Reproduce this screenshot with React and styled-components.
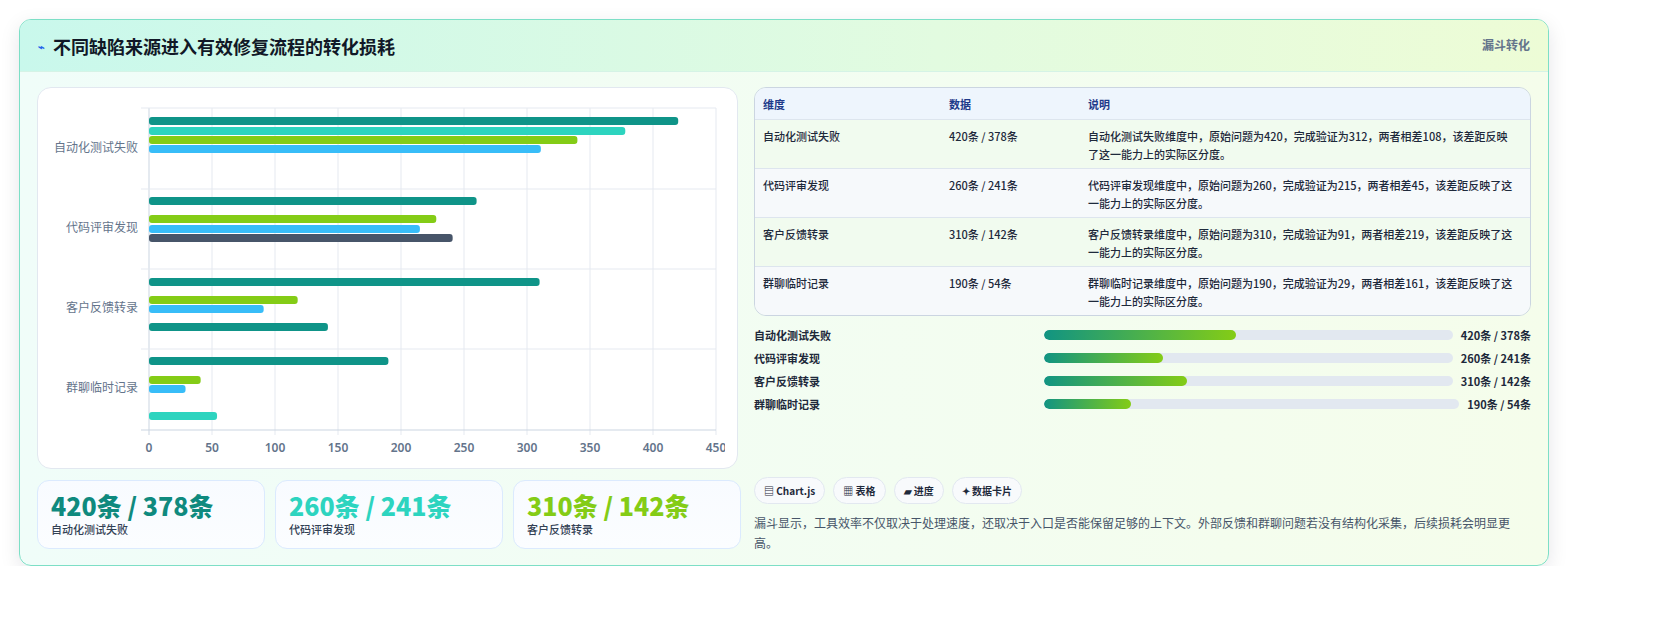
import React from "react";
import styled, { createGlobalStyle } from "styled-components";

const Global = createGlobalStyle`
  body { margin: 0; background: #fff; font-family: "Noto Sans CJK SC", "Noto Sans", sans-serif; }
`;

const Page = styled.div`padding: 19px 110px 0 19px; box-sizing: border-box; width: 1660px;`;
const Card = styled.div`
  width: 1530px; height: 547px; box-sizing: border-box;
  border: 1px solid #7ddfc6; border-radius: 12px; overflow: hidden;
  background: linear-gradient(90deg, #f0fdf9 0%, #f5fdeb 100%);
  box-shadow: 0 6px 20px rgba(15, 23, 42, 0.10);
`;
const Header = styled.div`
  height: 52px; box-sizing: border-box; padding: 0 18px;
  display: flex; align-items: center; justify-content: space-between;
  background: linear-gradient(90deg, #c9f8ec 0%, #e2fbe0 60%, #edfcd6 100%);
  border-bottom: 1px solid #d5f3e6;
`;
const Title = styled.h2`
  margin: 0; font-size: 18px; font-weight: 700; color: #111827;
  display: flex; align-items: center; gap: 8px;
`;
const Tag = styled.span`font-size: 12px; font-weight: 700; color: #64748b; align-self: flex-start; margin-top: 16px;`;
const Body = styled.div`display: grid; grid-template-columns: 701px 777px; gap: 16px; padding: 15px 17px 0 17px;`;
const Left = styled.div`display: flex; flex-direction: column; gap: 11px;`;
const ChartBox = styled.div`
  height: 382px; background: #fff; border: 1px solid #e2e8f0; border-radius: 14px; box-sizing: border-box;
`;
const Stats = styled.div`display: grid; grid-template-columns: repeat(3, 228px); gap: 10px;`;
const Stat = styled.div`
  height: 69px; box-sizing: border-box; padding: 8px 13px; border-radius: 12px;
  border: 1px solid #dbeafe; background: linear-gradient(180deg, #f8fbff, #fbfdff);
`;
const StatNum = styled.div`font-size: 25px; font-weight: 800; color: ${p => p.$c}; line-height: 32px;`;
const StatLbl = styled.div`font-size: 11px; color: #334155; font-weight: 500;`;
const Right = styled.div`display: flex; flex-direction: column;`;
const Table = styled.div`
  border: 1px solid #cbd5e1; border-radius: 12px; overflow: hidden; font-size: 11px; color: #1e293b;
`;
const Row = styled.div`
  display: grid; grid-template-columns: 186px 139px 1fr; padding: 0 14px 0 8px;
  align-items: ${p => (p.$head ? "center" : "start")};
  min-height: ${p => (p.$head ? "31px" : "49px")};
  padding-top: ${p => (p.$head ? "0" : "7px")}; box-sizing: border-box;
  background: ${p => (p.$head ? "#eef5fd" : p.$alt ? "#f6f9fb" : "#f1fbef")};
  color: ${p => (p.$head ? "#1e3a8a" : "#1e293b")};
  font-weight: ${p => (p.$head ? 600 : 500)};
  border-top: ${p => (p.$first ? "none" : "1px solid #dde5ee")};
  line-height: 18px;
`;
const Bars = styled.div`display: flex; flex-direction: column; gap: 5px; margin-top: 10px;`;
const BarRow = styled.div`
  display: grid; grid-template-columns: 282px 1fr auto; gap: 8px; align-items: center;
  font-size: 11px; font-weight: 600; color: #1e293b; height: 18px;
`;
const Track = styled.div`height: 10px; border-radius: 5px; background: #e2e8f0; overflow: hidden;`;
const Fill = styled.div`height: 100%; border-radius: 5px; background: linear-gradient(90deg, #119482, #84cc16);`;
const Pills = styled.div`display: flex; gap: 8px; margin-top: 64px;`;
const Pill = styled.span`
  font-size: 10px; font-weight: 600; color: #1e293b; padding: 5px 9px;
  border: 1px solid #e2e8f0; border-radius: 14px; background: #f8fafc;
`;
const Note = styled.p`margin: 9px 0 0; font-size: 12px; color: #475569; line-height: 20px;`;

const C = { teal: "#0f9488", cyan: "#2dd4bf", green: "#84cc16", blue: "#38bdf8", dark: "#475569" };
const bars = [
  [121, 420, C.teal], [131, 378, C.cyan], [140, 340, C.green], [149, 311, C.blue],
  [201, 260, C.teal], [219, 228, C.green], [229, 215, C.blue], [238, 241, C.dark],
  [282, 310, C.teal], [300, 118, C.green], [309, 91, C.blue], [327, 142, C.teal],
  [361, 190, C.teal], [380, 41, C.green], [389, 29, C.blue], [416, 54, C.cyan],
];
const cats = ["自动化测试失败", "代码评审发现", "客户反馈转录", "群聊临时记录"];

function Chart() {
  const ox = 111, oy = 20, w = 567, k = w / 450;
  return (
    <svg width="687" height="380" viewBox="0 0 687 380">
      {Array.from({ length: 10 }, (_, i) => (
        <g key={i}>
          <line x1={ox + i * 63} x2={ox + i * 63} y1={oy} y2={oy + 322 + 5} stroke={i === 0 ? "#cbd5e1" : "#e5e9f0"} />
          <text x={ox + i * 63} y={oy + 344} fontSize="12" fontWeight="600" fill="#64748b" textAnchor="middle" fontFamily="Noto Sans, sans-serif">{i * 50}</text>
        </g>
      ))}
      {[0, 81, 161, 241].map(y => <line key={y} x1={ox - 8} x2={ox + w} y1={oy + y} y2={oy + y} stroke="#e5e9f0" />)}
      <line x1={ox - 8} x2={ox + w} y1={oy + 322} y2={oy + 322} stroke="#cbd5e1" />
      {cats.map((c, i) => (
        <text key={c} x={ox - 11} y={oy + 44 + i * 80} fontSize="12" fill="#64748b" textAnchor="end" fontFamily="Noto Sans CJK SC, sans-serif">{c}</text>
      ))}
      {bars.map(([y, v, col], i) => (
        <rect key={i} x={ox} y={y - 108 + oy - 4} width={v * k} height="8" rx="3" fill={col} />
      ))}
    </svg>
  );
}

const rows = [
  ["自动化测试失败", "420条 / 378条", "自动化测试失败维度中，原始问题为420，完成验证为312，两者相差108，该差距反映了这一能力上的实际区分度。"],
  ["代码评审发现", "260条 / 241条", "代码评审发现维度中，原始问题为260，完成验证为215，两者相差45，该差距反映了这一能力上的实际区分度。"],
  ["客户反馈转录", "310条 / 142条", "客户反馈转录维度中，原始问题为310，完成验证为91，两者相差219，该差距反映了这一能力上的实际区分度。"],
  ["群聊临时记录", "190条 / 54条", "群聊临时记录维度中，原始问题为190，完成验证为29，两者相差161，该差距反映了这一能力上的实际区分度。"],
];
const prog = [47, 29, 35, 21];

export default function App() {
  return (
    <>
      <Global />
      <Page>
        <Card>
          <Header>
            <Title><span style={{ color: "#2563eb", fontSize: 11 }}>⌁</span>不同缺陷来源进入有效修复流程的转化损耗</Title>
            <Tag>漏斗转化</Tag>
          </Header>
          <Body>
            <Left>
              <ChartBox><Chart /></ChartBox>
              <Stats>
                <Stat><StatNum $c="#0f8a7e">420条 / 378条</StatNum><StatLbl>自动化测试失败</StatLbl></Stat>
                <Stat><StatNum $c="#2dd4bf">260条 / 241条</StatNum><StatLbl>代码评审发现</StatLbl></Stat>
                <Stat><StatNum $c="#84cc16">310条 / 142条</StatNum><StatLbl>客户反馈转录</StatLbl></Stat>
              </Stats>
            </Left>
            <Right>
              <Table>
                <Row $head $first><span>维度</span><span>数据</span><span>说明</span></Row>
                {rows.map((r, i) => (
                  <Row key={i} $alt={i % 2 === 1}><span>{r[0]}</span><span>{r[1]}</span><span>{r[2]}</span></Row>
                ))}
              </Table>
              <Bars>
                {rows.map((r, i) => (
                  <BarRow key={i}><span>{r[0]}</span><Track><Fill style={{ width: `${prog[i]}%` }} /></Track><span>{r[1]}</span></BarRow>
                ))}
              </Bars>
              <Pills>
                <Pill>▤ Chart.js</Pill><Pill>▦ 表格</Pill><Pill>▰ 进度</Pill><Pill>✦ 数据卡片</Pill>
              </Pills>
              <Note>漏斗显示，工具效率不仅取决于处理速度，还取决于入口是否能保留足够的上下文。外部反馈和群聊问题若没有结构化采集，后续损耗会明显更高。</Note>
            </Right>
          </Body>
        </Card>
      </Page>
    </>
  );
}
